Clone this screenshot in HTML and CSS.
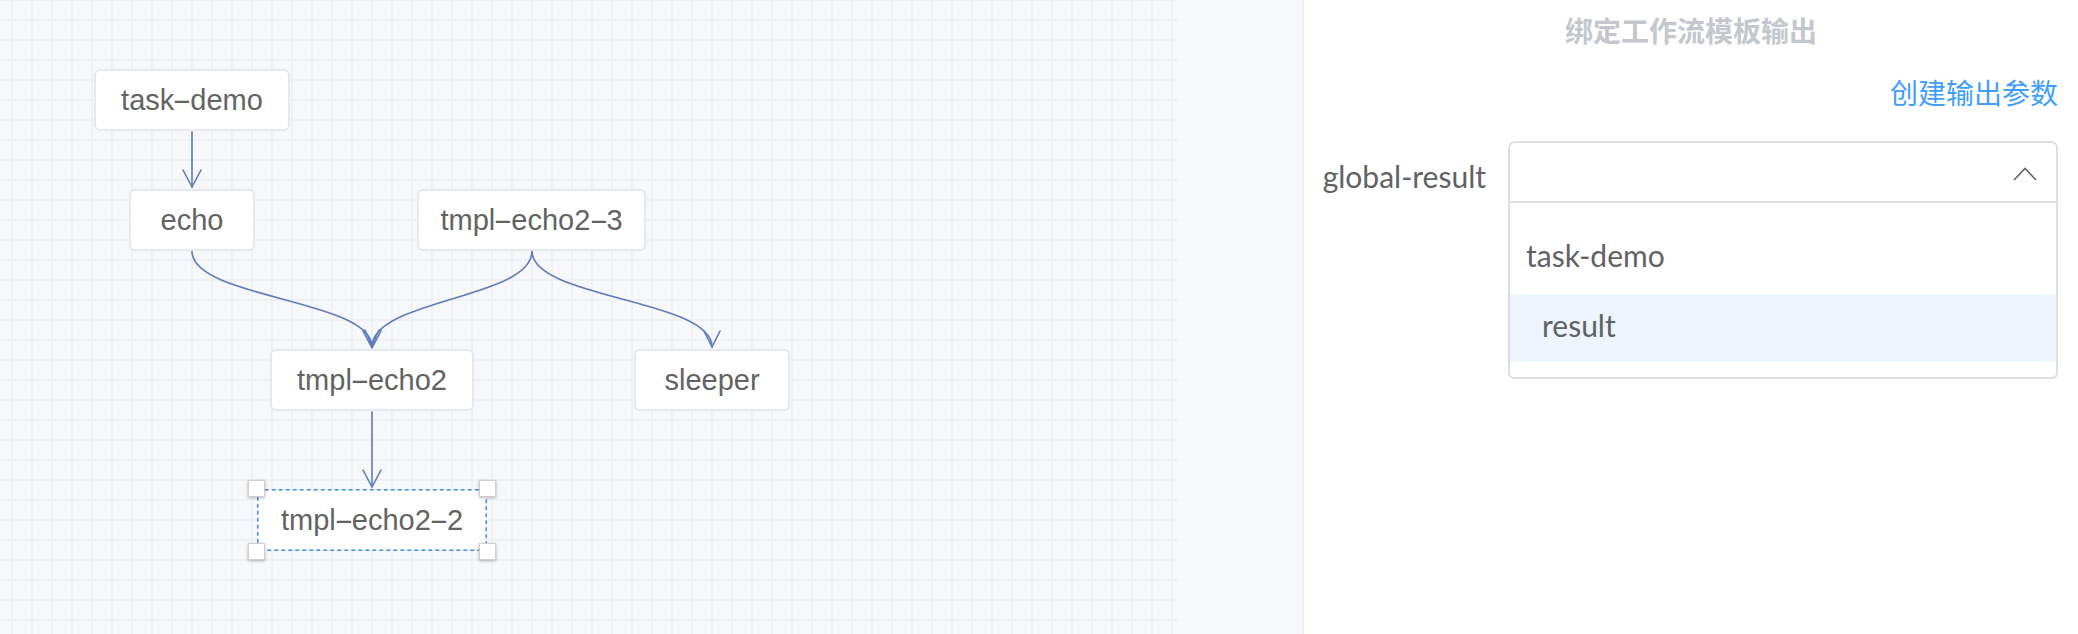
FILE: index.html
```html
<!DOCTYPE html>
<html lang="zh-CN">
<head>
<meta charset="utf-8">
<title>工作流模板</title>
<link rel="stylesheet" href="styles.css">
</head>
<body>
<div class="app">
  <div class="canvas">
    <div class="grid"></div>
    <div class="diagram">
      <svg class="edges" width="1302" height="634" viewBox="0 0 1302 634">
        <g fill="none" stroke="#5d7cb9" stroke-width="1.6" stroke-linecap="round" stroke-linejoin="round">
          <path d="M192 132 L192 187"/>
          <path d="M183 170 L192 187 L201 170"/>
          <path d="M192 251 C192 299 372 299 372 347"/>
          <path d="M532 251 C532 299 372 299 372 347"/>
          <path d="M532 251 C532 299 712 299 712 347"/>
          <path d="M363 331 L372 348 L381 331"/>
          <path d="M365 330 L372 346 L379 330"/>
          <path d="M704 331 L712 347 L720 331"/>
          <path d="M372 412 L372 487"/>
          <path d="M363 470 L372 487 L381 470"/>
        </g>
      </svg>
      <div class="node n-task-demo">task<span class="dash">-</span>demo</div>
      <div class="node n-echo">echo</div>
      <div class="node n-echo23">tmpl<span class="dash">-</span>echo2<span class="dash">-</span>3</div>
      <div class="node n-echo2">tmpl<span class="dash">-</span>echo2</div>
      <div class="node n-sleeper">sleeper</div>
      <div class="node node-selected n-echo22">
        <svg class="sel-outline" width="230" height="62" viewBox="0 0 230 62">
          <rect x="0.75" y="0.75" width="228.5" height="60.5" fill="none" stroke="#3d8ee8" stroke-width="1.5" stroke-dasharray="4 3"/>
        </svg>
        <span class="node-text">tmpl<span class="dash">-</span>echo2<span class="dash">-</span>2</span>
        <span class="handle h-tl"></span>
        <span class="handle h-tr"></span>
        <span class="handle h-bl"></span>
        <span class="handle h-br"></span>
      </div>
    </div>
  </div>
  <aside class="panel">
    <h2 class="panel-title">绑定工作流模板输出</h2>
    <div class="panel-actions"><a class="link">创建输出参数</a></div>
    <div class="form-row">
      <label class="form-label">global-result</label>
      <div class="select-wrap">
        <div class="select">
          <svg class="chevron" width="24" height="14" viewBox="0 0 24 14">
            <polyline points="1,13 12,1.5 23,13" fill="none" stroke="#5f6266" stroke-width="1.6"/>
          </svg>
        </div>
        <div class="dropdown">
          <div class="group-label">task-demo</div>
          <div class="option is-hover">result</div>
        </div>
      </div>
    </div>
  </aside>
</div>
</body>
</html>
```

FILE: styles.css
```css
* { box-sizing: border-box; }

html, body {
  margin: 0;
  padding: 0;
  width: 2078px;
  height: 634px;
  overflow: hidden;
  background: #ffffff;
}

.app {
  display: flex;
  width: 2078px;
  height: 634px;
}

.canvas {
  position: relative;
  flex: none;
  width: 1302px;
  height: 634px;
  display: flex;
  background: #f7f8fa;
}

.grid {
  width: 1178px;
  height: 100%;
  background-color: #f7f8fa;
  background-image:
    linear-gradient(90deg, #eff0f3 0, #eff0f3 2px, transparent 2px),
    linear-gradient(180deg, #eff0f3 0, #eff0f3 2px, transparent 2px);
  background-size: 20px 20px;
  background-position: 11px 19px;
}

.diagram {
  position: absolute;
  inset: 0;
}

.edges {
  position: absolute;
  left: 0;
  top: 0;
}

.node {
  position: absolute;
  height: 62px;
  display: flex;
  align-items: center;
  justify-content: center;
  background: #ffffff;
  border: 2px solid #e4e8f0;
  border-radius: 6px;
  font-family: "Liberation Sans", Arial, sans-serif;
  font-size: 29px;
  color: #636363;
  white-space: nowrap;
}

.dash {
  display: inline-block;
  margin: 0 0.11em;
  transform: scaleX(2);
}

.n-task-demo { left: 94px; top: 69px; width: 196px; }
.n-echo { left: 129px; top: 189px; width: 126px; }
.n-echo23 { left: 417px; top: 189px; width: 229px; }
.n-echo2 { left: 270px; top: 349px; width: 204px; }
.n-sleeper { left: 634px; top: 349px; width: 156px; }
.n-echo22 { left: 257px; top: 489px; width: 230px; }

.node-selected {
  border: none;
  border-radius: 0;
}

.sel-outline {
  position: absolute;
  left: 0;
  top: 0;
}

.node-text {
  position: relative;
}

.handle {
  position: absolute;
  width: 17px;
  height: 17px;
  background: #ffffff;
  border: 1px solid #cfcfcf;
  box-shadow: 0 1px 3px rgba(0, 0, 0, 0.28);
}

.h-tl { left: -9px; top: -9px; }
.h-tr { right: -9px; top: -9px; }
.h-bl { left: -9px; bottom: -9px; }
.h-br { right: -9px; bottom: -9px; }

.panel {
  flex: 1;
  min-width: 0;
  border-left: 2px solid #eceef3;
  padding: 10px 20px 0 14px;
  background: #ffffff;
  font-family: Lato, "Noto Sans CJK SC", sans-serif;
}

.panel-title {
  margin: 0 0 0 6px;
  font-family: "Noto Sans CJK SC", sans-serif;
  font-size: 28px;
  line-height: 40px;
  font-weight: 700;
  color: #c4c7ce;
  text-align: center;
}

.panel-actions {
  margin-top: 22px;
  text-align: right;
  font-family: "Noto Sans CJK SC", sans-serif;
  font-size: 28px;
  line-height: 40px;
  height: 40px;
}

.link {
  color: #409eff;
  cursor: pointer;
}

.form-row {
  display: flex;
  align-items: flex-start;
  margin-top: 29px;
}

.form-label {
  flex: none;
  width: 190px;
  padding: 4px 22px 0 0;
  text-align: right;
  white-space: nowrap;
  font-size: 30px;
  line-height: 62px;
  height: 62px;
  color: #606266;
}

.select-wrap {
  flex: 1;
  min-width: 0;
}

.select {
  height: 62px;
  border: 2px solid #dcdfe6;
  border-radius: 7px 7px 0 0;
  display: flex;
  align-items: center;
  justify-content: flex-end;
  padding: 4px 19px 0 0;
}

.chevron {
  display: block;
}

.dropdown {
  border: 2px solid #dcdfe6;
  border-top: none;
  border-radius: 0 0 6px 6px;
  padding: 18px 0 15px 0;
}

.group-label {
  padding-left: 16px;
  font-size: 30px;
  line-height: 68px;
  height: 68px;
  color: #606266;
}

.option {
  margin-top: 5px;
  padding: 0 0 6px 32px;
  font-size: 30px;
  line-height: 62px;
  height: 68px;
  color: #606266;
}

.option.is-hover {
  background: #edf5fe;
}
```
